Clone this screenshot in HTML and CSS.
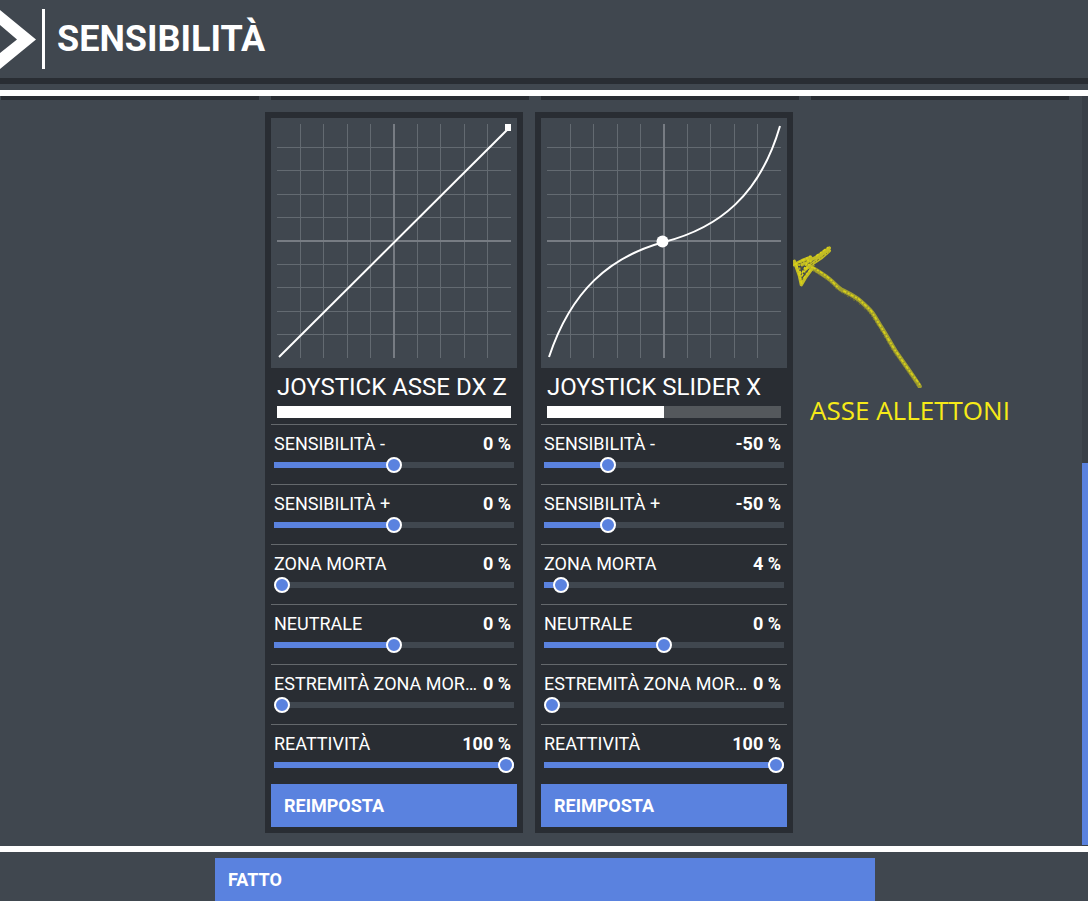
FILE: index.html
```html
<!DOCTYPE html>
<html lang="it">
<head>
    <meta charset="UTF-8">
    <meta name="viewport" content="width=device-width, initial-scale=1.0">
    <title>Sensibilità</title>
    <link rel="stylesheet" href="styles.css">
</head>
<body>

    <header class="header">
        <svg class="chevron" viewBox="0 0 36 60" aria-hidden="true">
            <path d="M0 1 L36 30.500 L0 60 V44 L17 30.500 L0 16 Z"/>
        </svg>
        <h1 class="title">SENSIBILITÀ</h1>
    </header>

    <main class="main">
        <div class="content">
            <!-- bottom edge of the previous row of axes -->
            <div class="previous-row">
                <div class="stub"></div>
                <div class="stub"></div>
                <div class="stub"></div>
                <div class="stub"></div>
            </div>

            <div class="cards-row">
                <div class="cards">
                    <section class="card">
                        <div class="chart">
                            <svg class="graph" viewBox="0 0 234 234" aria-hidden="true">
                                <path class="grid-line" d="M23.500 0V234M46.500 0V234M70.500 0V234M93.500 0V234M140.500 0V234M163.500 0V234M187.500 0V234M210.500 0V234M0 23.500H234M0 46.500H234M0 70.500H234M0 93.500H234M0 140.500H234M0 163.500H234M0 187.500H234M0 210.500H234"/>
                                <path class="grid-axis" d="M117 0V234M0 117H234"/>
                                <path class="curve" d="M2 233L232 4"/>
                                <path class="marker" d="M228 0H234V7H229L228 6Z"/>
                            </svg>
                        </div>
                        <h2 class="axis-name">JOYSTICK ASSE DX Z</h2>
                        <progress class="level" value="100" max="100" aria-label="JOYSTICK ASSE DX Z"></progress>

                        <div class="setting">
                            <div class="setting-text">
                                <label for="z-minus">SENSIBILITÀ -</label>
                                <output for="z-minus">0 %</output>
                            </div>
                            <input type="range" id="z-minus" min="-100" max="100" value="0" style="--fill: 50%">
                        </div>
                        <div class="setting">
                            <div class="setting-text">
                                <label for="z-plus">SENSIBILITÀ +</label>
                                <output for="z-plus">0 %</output>
                            </div>
                            <input type="range" id="z-plus" min="-100" max="100" value="0" style="--fill: 50%">
                        </div>
                        <div class="setting">
                            <div class="setting-text">
                                <label for="z-dead">ZONA MORTA</label>
                                <output for="z-dead">0 %</output>
                            </div>
                            <input type="range" id="z-dead" min="0" max="100" value="0" style="--fill: 0%">
                        </div>
                        <div class="setting">
                            <div class="setting-text">
                                <label for="z-neutral">NEUTRALE</label>
                                <output for="z-neutral">0 %</output>
                            </div>
                            <input type="range" id="z-neutral" min="-100" max="100" value="0" style="--fill: 50%">
                        </div>
                        <div class="setting">
                            <div class="setting-text">
                                <label for="z-extreme">ESTREMITÀ ZONA MOR…</label>
                                <output for="z-extreme">0 %</output>
                            </div>
                            <input type="range" id="z-extreme" min="0" max="100" value="0" style="--fill: 0%">
                        </div>
                        <div class="setting">
                            <div class="setting-text">
                                <label for="z-react">REATTIVITÀ</label>
                                <output for="z-react">100 %</output>
                            </div>
                            <input type="range" id="z-react" min="0" max="100" value="100" style="--fill: 100%">
                        </div>
                        <button class="btn" type="button">REIMPOSTA</button>
                    </section>

                    <section class="card">
                        <div class="chart">
                            <svg class="graph" viewBox="0 0 234 234" aria-hidden="true">
                                <path class="grid-line" d="M23.500 0V234M46.500 0V234M70.500 0V234M93.500 0V234M140.500 0V234M163.500 0V234M187.500 0V234M210.500 0V234M0 23.500H234M0 46.500H234M0 70.500H234M0 93.500H234M0 140.500H234M0 163.500H234M0 187.500H234M0 210.500H234"/>
                                <path class="grid-axis" d="M117 0V234M0 117H234"/>
                                <path class="curve" d="M2 233C24 167 62 133 117 118C172 104 213 71 233 2"/>
                                <circle class="marker" cx="115.500" cy="117.500" r="6"/>
                            </svg>
                        </div>
                        <h2 class="axis-name">JOYSTICK SLIDER X</h2>
                        <progress class="level" value="50" max="100" aria-label="JOYSTICK SLIDER X"></progress>

                        <div class="setting">
                            <div class="setting-text">
                                <label for="x-minus">SENSIBILITÀ -</label>
                                <output for="x-minus">-50 %</output>
                            </div>
                            <input type="range" id="x-minus" min="-100" max="100" value="-50" style="--fill: 25%">
                        </div>
                        <div class="setting">
                            <div class="setting-text">
                                <label for="x-plus">SENSIBILITÀ +</label>
                                <output for="x-plus">-50 %</output>
                            </div>
                            <input type="range" id="x-plus" min="-100" max="100" value="-50" style="--fill: 25%">
                        </div>
                        <div class="setting">
                            <div class="setting-text">
                                <label for="x-dead">ZONA MORTA</label>
                                <output for="x-dead">4 %</output>
                            </div>
                            <input type="range" id="x-dead" min="0" max="100" value="4" style="--fill: 4%">
                        </div>
                        <div class="setting">
                            <div class="setting-text">
                                <label for="x-neutral">NEUTRALE</label>
                                <output for="x-neutral">0 %</output>
                            </div>
                            <input type="range" id="x-neutral" min="-100" max="100" value="0" style="--fill: 50%">
                        </div>
                        <div class="setting">
                            <div class="setting-text">
                                <label for="x-extreme">ESTREMITÀ ZONA MOR…</label>
                                <output for="x-extreme">0 %</output>
                            </div>
                            <input type="range" id="x-extreme" min="0" max="100" value="0" style="--fill: 0%">
                        </div>
                        <div class="setting">
                            <div class="setting-text">
                                <label for="x-react">REATTIVITÀ</label>
                                <output for="x-react">100 %</output>
                            </div>
                            <input type="range" id="x-react" min="0" max="100" value="100" style="--fill: 100%">
                        </div>
                        <button class="btn" type="button">REIMPOSTA</button>
                    </section>

                    <!-- hand-drawn note next to the second axis -->
                    <div class="note">
                        <svg class="arrow" viewBox="39 42 393 432" aria-hidden="true">
                            <path class="chalk chalk-shaft" d="M86 108C108 120 130 133 150 149C164 160 170 170 184 179C206 190 222 197 240 212C256 226 266 235 276 247C288 264 294 277 303 290C320 316 332 340 346 362C372 400 398 434 419 469"/>
                            <path class="chalk-light" d="M98 112L128 130L150 147L176 175M190 182L236 207L274 243L300 286L344 359L390 425L420 464"/>
                            <path class="chalk-dark" d="M100 122L146 153L172 180L234 218L270 252L296 292L338 363L414 470"/>
                            <path class="chalk" d="M42 104L66 92L92 82M43 94L58 136L64 164M64 164L78 140L96 116M66 104L96 88L112 80L148 54M76 118L100 99L126 82L148 62"/>
                            <path class="chalk-light" d="M43 104L92 78M50 104L66 166M56 98L62 136M64 140L94 92M70 146L102 104M66 130L86 88M108 78L146 51"/>
                            <path class="chalk-dark" d="M54 102L82 92M58 118L74 102M66 150L80 122M94 104L146 66"/>
                        </svg>
                        <p class="note-text">ASSE ALLETTONI</p>
                    </div>
                </div>
            </div>
        </div>
        <div class="scrollbar"><div class="scrollbar-thumb" style="height: 51%"></div></div>
    </main>

    <footer class="footer">
        <button class="btn btn-done" type="button">FATTO</button>
    </footer>

<script>
    document.querySelectorAll("input[type=range]").forEach(function (slider) {
        slider.addEventListener("input", function () {
            let fill = (slider.value - slider.min) / (slider.max - slider.min) * 100;
            slider.style.setProperty("--fill", fill + "%");
            slider.parentElement.querySelector("output").textContent = slider.value + " %";
        });
    });
</script>

</body>
</html>
```
FILE: styles.css
```css
* {
    box-sizing: border-box;
}
body {
    display: flex;
    flex-direction: column;
    min-height: 100vh;
    margin: 0;
    font-family: Roboto, "Liberation Sans", sans-serif;
    font-size: 18px;
    line-height: 24px;
    color: white;
    background-color: #40474f;
    overflow-x: hidden;
}
.header {
    display: flex;
    align-items: center;
    gap: 6px;
    height: 84px;
    margin-bottom: 6px;
    border-bottom: 6px solid #292d33;
}
.chevron {
    width: 36px;
    height: 60px;
    fill: white;
}
.title {
    margin: 0;
    padding-left: 12px;
    border-left: 3px solid white;
    font-size: 36px;
    line-height: 60px;
}
.main {
    display: flex;
    flex: 1;
    border-top: 6px solid white;
    border-bottom: 6px solid white;
}
.content {
    flex: 1;
}
.previous-row {
    display: flex;
    gap: 12px;
    padding: 0 13px 0 1px;
}
.stub {
    flex: 1;
    height: 4px;
    background-color: #292d33;
}
.cards-row {
    display: flex;
    justify-content: center;
    padding: 12px 24px 13px 0;
}
.cards {
    position: relative;
    display: flex;
    gap: 12px;
}
.card {
    width: 258px;
    padding: 6px;
    background-color: #292d33;
}
.chart {
    padding: 6px;
    height: 250px;
    background-color: #40474f;
}
.graph {
    display: block;
    width: 100%;
}
.grid-line {
    fill: none;
    stroke: #636a71;
}
.grid-axis {
    fill: none;
    stroke: #777c83;
    stroke-width: 2;
}
.curve {
    fill: none;
    stroke: white;
    stroke-width: 2;
}
.marker {
    fill: white;
}
.axis-name {
    margin: 0;
    padding: 0 6px;
    font-size: 24px;
    font-weight: 400;
    line-height: 38px;
    white-space: nowrap;
}
.level {
    display: block;
    width: 234px;
    height: 12px;
    margin: 0 6px 6px;
    border: none;
    appearance: none;
    -webkit-appearance: none;
}
.level::-webkit-progress-bar {
    background-color: #54585c;
}
.level::-webkit-progress-value {
    background-color: white;
}
.setting {
    height: 60px;
    padding: 7px 3px 0;
    border-top: 1px solid #64686c;
}
.setting-text {
    display: flex;
    justify-content: space-between;
    padding-right: 3px;
    white-space: nowrap;
}
.setting-text output {
    font-weight: 700;
}
input[type=range] {
    display: block;
    width: 100%;
    height: 18px;
    margin: 0;
    background: none;
    appearance: none;
    -webkit-appearance: none;
    cursor: pointer;
}
input[type=range]::-webkit-slider-runnable-track {
    height: 6px;
    background: linear-gradient(#5a82df, #5a82df) 0 0 / var(--fill) 100% no-repeat #40474f;
}
input[type=range]::-webkit-slider-thumb {
    width: 16px;
    height: 16px;
    margin-top: -5px;
    border: 2px solid white;
    border-radius: 50%;
    background-color: #5a82df;
    -webkit-appearance: none;
}
.btn {
    display: block;
    width: 100%;
    height: 43px;
    padding: 0 13px;
    border: none;
    font-family: inherit;
    font-size: 18px;
    font-weight: 700;
    text-align: left;
    color: white;
    background-color: #5a82df;
    cursor: pointer;
}
.btn:hover {
    background-color: #6c91e6;
}
.note {
    position: absolute;
    top: 132px;
    left: 100%;
    color: #f6ea18;
}
.arrow {
    display: block;
    width: 131px;
    height: 144px;
}
.chalk {
    fill: none;
    stroke: #c3bd24;
    stroke-width: 10;
    stroke-linecap: round;
    stroke-linejoin: round;
}
.chalk-shaft {
    stroke: #a29f2e;
    stroke-width: 13;
}
.chalk-light {
    fill: none;
    stroke: #d8d118;
    stroke-width: 5;
    stroke-dasharray: 10 5 6 4;
}
.chalk-dark {
    fill: none;
    stroke: #77772f;
    stroke-width: 3;
    stroke-dasharray: 7 6 3 5;
}
.note-text {
    margin: 0;
    padding-left: 17px;
    font-family: "Open Sans", "Noto Sans", sans-serif;
    font-size: 26px;
    line-height: 44px;
    white-space: nowrap;
}
.scrollbar {
    display: flex;
    flex-direction: column;
    justify-content: flex-end;
    width: 6px;
    padding-bottom: 1px;
    background-color: #393f47;
}
.scrollbar-thumb {
    background-color: #5a82df;
}
.footer {
    padding: 6px 0 0 2px;
}
.btn-done {
    max-width: 660px;
    margin: 0 auto;
}
```
